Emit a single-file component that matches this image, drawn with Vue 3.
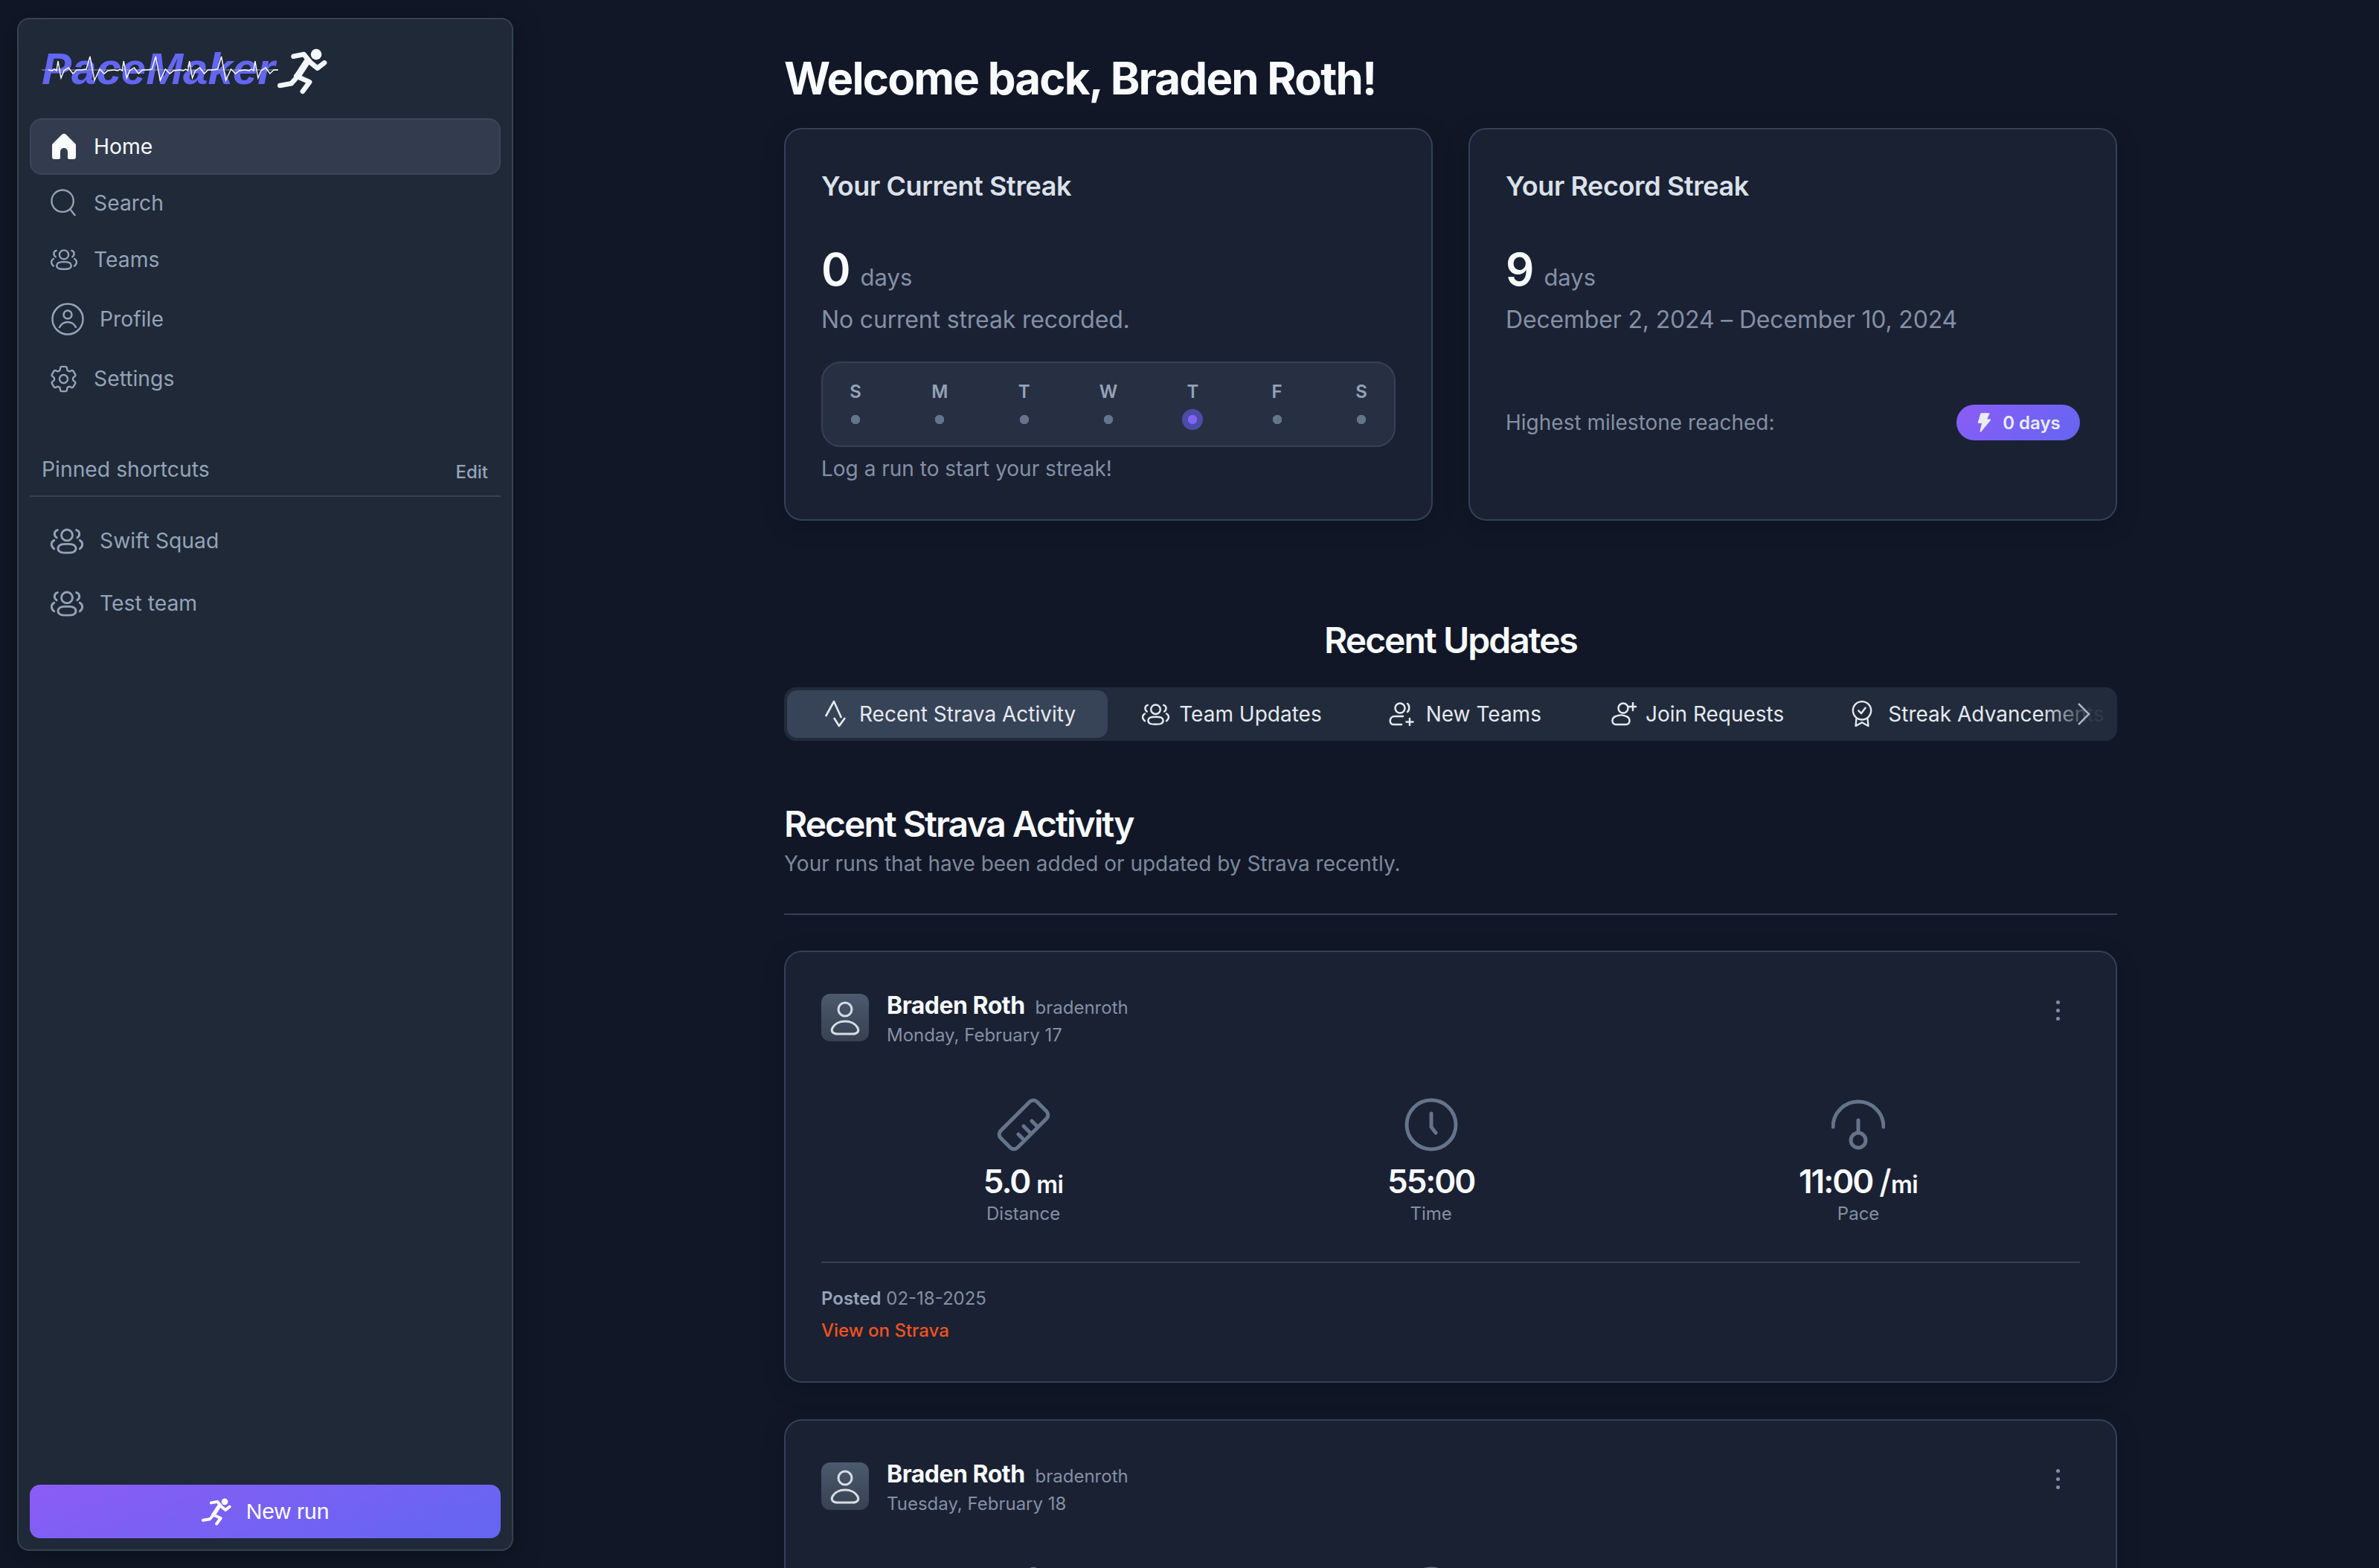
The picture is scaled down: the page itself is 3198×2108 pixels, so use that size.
<template>
  <div class="app">
    <svg class="sprite" aria-hidden="true">
      <symbol id="home" viewBox="0 0 34 36">
        <path fill="currentColor" d="M14 2a4 4 0 0 1 6 0l12 12a3 3 0 0 1 1 2.500V32a3 3 0 0 1-3 3h-6a2 2 0 0 1-2-2v-8a5 5 0 0 0-10 0v8a2 2 0 0 1-2 2H4a3 3 0 0 1-3-3V16.500A3 3 0 0 1 2 14z" />
      </symbol>
      <symbol id="search" viewBox="0 0 38 40">
        <circle cx="17" cy="17" r="15.500" fill="none" stroke="currentColor" stroke-width="2.500" />
        <path d="M28 29l7 9" fill="none" stroke="currentColor" stroke-width="2.500" />
      </symbol>
      <symbol id="team" viewBox="0 0 40 32">
        <g fill="none" stroke="currentColor" stroke-width="2.500" stroke-linecap="round">
          <circle cx="20" cy="9" r="6.500" />
          <path d="M12 20.500c-3 2-3.500 6 0 8 2 1.500 14 1.500 16 0 3.500-2 3-6 0-8-3-1.500-13-1.500-16 0z" />
          <path d="M9 3C5 4 4 9 8 12M31 3c4 1 5 6 1 9M5 15c-4 2-4 7 0 10M35 15c4 2 4 7 0 10" />
        </g>
      </symbol>
      <symbol id="profile" viewBox="0 0 44 44">
        <g fill="none" stroke="currentColor" stroke-width="2.500" stroke-linecap="round">
          <circle cx="22" cy="22" r="20.500" />
          <circle cx="22" cy="16" r="5.500" />
          <path d="M11 33c3-6 7-7 11-7s8 1 11 7" />
        </g>
      </symbol>
      <symbol id="gear" viewBox="2.500 2 19 20">
        <path fill="none" stroke="currentColor" stroke-width="1.300" d="M9.594 3.940c.09-.542.56-.94 1.110-.94h2.593c.55 0 1.020.398 1.110.94l.213 1.281c.063.374.313.686.645.870.074.040.147.083.22.127.325.196.72.257 1.075.124l1.217-.456a1.125 1.125 0 0 1 1.370.49l1.296 2.247a1.125 1.125 0 0 1-.26 1.431l-1.003.827c-.293.241-.438.613-.43.992a7.723 7.723 0 0 1 0 .255c-.008.378.137.75.43.991l1.004.827c.424.35.534.955.26 1.430l-1.298 2.247a1.125 1.125 0 0 1-1.369.491l-1.217-.456c-.355-.133-.75-.072-1.076.124a6.470 6.470 0 0 1-.22.128c-.331.183-.581.495-.644.869l-.213 1.281c-.09.543-.56.94-1.110.94h-2.594c-.55 0-1.019-.398-1.110-.94l-.213-1.281c-.062-.374-.312-.686-.644-.87a6.520 6.520 0 0 1-.22-.127c-.325-.196-.72-.257-1.076-.124l-1.217.456a1.125 1.125 0 0 1-1.369-.49l-1.297-2.247a1.125 1.125 0 0 1 .26-1.431l1.004-.827c.292-.24.437-.613.43-.991a6.932 6.932 0 0 1 0-.255c.007-.38-.138-.751-.43-.992l-1.004-.827a1.125 1.125 0 0 1-.26-1.430l1.297-2.247a1.125 1.125 0 0 1 1.370-.491l1.216.456c.356.133.751.072 1.076-.124.072-.044.146-.086.22-.128.332-.183.582-.495.644-.869l.214-1.280z" />
        <circle cx="12" cy="12" r="3" fill="none" stroke="currentColor" stroke-width="1.300" />
      </symbol>
      <symbol id="runner" viewBox="0 0 202 186">
        <circle cx="157" cy="24" r="22" fill="currentColor" />
        <g fill="none" stroke="currentColor" stroke-linecap="round" stroke-linejoin="round">
          <path stroke-width="20" d="M65 32l42-8 28 34 27 22 28-22" />
          <path stroke-width="27" d="M122 50L84 108" />
          <path stroke-width="20" d="M76 112l54 24-28 38" />
          <path stroke-width="20" d="M74 122l-18 20-46 8" />
        </g>
      </symbol>
      <symbol id="bolt" viewBox="0 0 24 30">
        <path fill="currentColor" stroke="currentColor" stroke-width="2" stroke-linejoin="round" d="M8 2h11l-4 9h6L7 28l3-13H4z" />
      </symbol>
      <symbol id="strava" viewBox="0 0 34 38">
        <path d="M4 22L15 2l10 22M15 24l7 11 8-11" fill="none" stroke="currentColor" stroke-width="2.600" stroke-linejoin="round" />
      </symbol>
      <symbol id="newteam" viewBox="0 0 38 32">
        <g fill="none" stroke="currentColor" stroke-width="2.500" stroke-linecap="round">
          <circle cx="15" cy="8" r="6.500" />
          <path d="M25 2c3 2 3 9 0 11M19 19H8c-8 0-8 11-2 11h11M28 22v9M23.500 26.500h9" />
        </g>
      </symbol>
      <symbol id="join" viewBox="0 0 38 32">
        <g fill="none" stroke="currentColor" stroke-width="2.500" stroke-linecap="round">
          <circle cx="20" cy="8" r="6.500" />
          <path d="M10 19c-6 2-6 10 0 11h14c6-1 6-9 0-11-4-2-10-2-14 0zM33 1v10M28 6h10" />
        </g>
      </symbol>
      <symbol id="medal" viewBox="0 0 32 38">
        <g fill="none" stroke="currentColor" stroke-width="2.500" stroke-linejoin="round" stroke-linecap="round">
          <circle cx="16" cy="14" r="13" />
          <path d="M11 14l4 4 6-8M8 25l-1 11 9-5 9 5-1-11" />
        </g>
      </symbol>
      <symbol id="ruler" viewBox="0 0 72 72">
        <g fill="none" stroke="currentColor" stroke-width="5" stroke-linecap="round">
          <rect x="20" y="1.500" width="32" height="69" rx="7" transform="rotate(45 36 36)" />
          <path d="M53 37l-6-6M44 46l-8-8M35 55l-6-6" />
        </g>
      </symbol>
      <symbol id="clock" viewBox="0 0 72 72">
        <g fill="none" stroke="currentColor" stroke-width="5" stroke-linecap="round" stroke-linejoin="round">
          <circle cx="36" cy="36" r="33" />
          <path d="M36 21v18l6 8" />
        </g>
      </symbol>
      <symbol id="gauge" viewBox="0 0 72 72">
        <g fill="none" stroke="currentColor" stroke-width="5" stroke-linecap="round">
          <path d="M2 39a34 34 0 0 1 68 0" />
          <path d="M36 30v16" />
          <circle cx="36" cy="57" r="10" />
        </g>
      </symbol>
    </svg>

    <aside class="sidebar">
      <div class="logo">
        <div class="logo-mark">
          <span class="logo-text">PaceMaker</span>
          <svg class="ecg" viewBox="0 0 320 40">
            <path class="ecg-base" d="M0 20H318" />
            <path class="ecg-line" :d="ecgPath" />
          </svg>
        </div>
        <svg class="logo-run"><use href="#runner" /></svg>
      </div>

      <nav class="nav">
        <a
          v-for="item in navItems"
          :key="item.label"
          class="nav-item"
          :class="{ active: item.active, tall: item.tall }"
        >
          <svg :class="'ni-' + item.icon"><use :href="'#' + item.icon" /></svg>
          <span>{{ item.label }}</span>
        </a>
      </nav>

      <div class="pinned-head">
        <span>Pinned shortcuts</span>
        <a class="edit">Edit</a>
      </div>
      <div class="pinned">
        <a v-for="t in pinned" :key="t" class="nav-item tall">
          <svg class="ni-pin"><use href="#team" /></svg>
          <span>{{ t }}</span>
        </a>
      </div>

      <button class="new-run">
        <svg class="btn-run"><use href="#runner" /></svg>
        New run
      </button>
    </aside>

    <main class="main">
      <h1 class="welcome">Welcome back, Braden Roth!</h1>

      <div class="streaks">
        <section class="card streak">
          <h3>Your Current Streak</h3>
          <div class="count"><strong>0</strong><span>days</span></div>
          <p class="sub">No current streak recorded.</p>
          <div class="week">
            <div v-for="(d, i) in days" :key="i" class="day">
              <span class="day-name">{{ d }}</span>
              <span class="dot" :class="{ today: i === 4 }"></span>
            </div>
          </div>
          <p class="hint">Log a run to start your streak!</p>
        </section>

        <section class="card streak">
          <h3>Your Record Streak</h3>
          <div class="count"><strong>9</strong><span>days</span></div>
          <p class="sub">December 2, 2024 – December 10, 2024</p>
          <div class="milestone">
            <span>Highest milestone reached:</span>
            <span class="badge">
              <svg class="bolt"><use href="#bolt" /></svg>
              0 days
            </span>
          </div>
        </section>
      </div>

      <h2 class="updates-title">Recent Updates</h2>

      <div class="tabs">
        <div class="tab-row">
          <a
            v-for="(tab, i) in tabs"
            :key="tab.label"
            class="tab"
            :class="{ active: i === 0 }"
          >
            <svg :class="'ti-' + tab.icon"><use :href="'#' + tab.icon" /></svg>
            <span>{{ tab.label }}</span>
          </a>
        </div>
        <div class="tab-fade">
          <svg class="chev" viewBox="0 0 18 30"><path d="M2 1l14 14L2 29" /></svg>
        </div>
      </div>

      <h2 class="section-title">Recent Strava Activity</h2>
      <p class="section-sub">Your runs that have been added or updated by Strava recently.</p>
      <hr class="divider" />

      <article v-for="run in runs" :key="run.date" class="card run">
        <header class="run-head">
          <div class="avatar">
            <svg viewBox="0 0 64 64">
              <circle cx="32" cy="21" r="9" />
              <path d="M22 54c-7 0-9-4-7-8 3-6 10-9 17-9s14 3 17 9c2 4 0 8-7 8z" />
            </svg>
          </div>
          <div class="who">
            <div><span class="name">Braden Roth</span><span class="handle">bradenroth</span></div>
            <div class="date">{{ run.date }}</div>
          </div>
          <div class="more"><i></i><i></i><i></i></div>
        </header>

        <div class="stats">
          <div v-for="s in run.stats" :key="s.label" class="stat">
            <svg class="stat-ico"><use :href="'#' + s.icon" /></svg>
            <div class="stat-val">
              {{ s.value }}<small v-if="s.unit"><span v-if="s.perUnit" class="slash">/</span>{{ s.unit }}</small>
            </div>
            <div class="stat-label">{{ s.label }}</div>
          </div>
        </div>

        <footer class="run-foot">
          <div class="posted"><b>Posted</b> {{ run.posted }}</div>
          <a class="strava-link">View on Strava</a>
        </footer>
      </article>
    </main>
  </div>
</template>

<script setup>
const navItems = [
  { label: 'Home', icon: 'home', active: true },
  { label: 'Search', icon: 'search' },
  { label: 'Teams', icon: 'team' },
  { label: 'Profile', icon: 'profile', tall: true },
  { label: 'Settings', icon: 'gear' }
]
const pinned = ['Swift Squad', 'Test team']
const days = ['S', 'M', 'T', 'W', 'T', 'F', 'S']
const tabs = [
  { label: 'Recent Strava Activity', icon: 'strava' },
  { label: 'Team Updates', icon: 'team' },
  { label: 'New Teams', icon: 'newteam' },
  { label: 'Join Requests', icon: 'join' },
  { label: 'Streak Advancements', icon: 'medal' }
]

const stats = [
  { icon: 'ruler', value: '5.0', unit: 'mi', label: 'Distance' },
  { icon: 'clock', value: '55:00', label: 'Time' },
  { icon: 'gauge', value: '11:00', unit: 'mi', perUnit: true, label: 'Pace' }
]
const runs = [
  { date: 'Monday, February 17', posted: '02-18-2025', stats },
  { date: 'Tuesday, February 18', posted: '02-18-2025', stats }
]

// heartbeat trace over the logo, one period is a small + a big spike
const beat = [
  [0, 20], [5, 21], [8, 19], [11, 21], [13, 8], [17, 31], [21, 21], [27, 17], [33, 25],
  [38, 20], [44, 20], [51, 19], [56, 2], [62, 34], [69, 19], [75, 25], [80, 21], [88, 20]
]
let pts = []
for (let p = 0; p < 3; p++) {
  pts = pts.concat(beat.map(([x, y]) => [x + 9 + p * 88.3, y]))
}
pts = pts.concat(beat.slice(0, 11).map(([x, y]) => [x + 9 + 3 * 88.3, y]))
const ecgPath = 'M' + pts.map(([x, y]) => x.toFixed(1) + ' ' + y).join('L')
</script>

<style>
html, body {
  margin: 0;
  background: #111727;
  overflow: hidden;
}
</style>

<style scoped>
.app {
  display: flex;
  height: 100vh;
  overflow: hidden;
  background: #111727;
  font-family: Inter, "Noto Sans", sans-serif;
  color: #94a3b8;
}
.sprite {
  position: absolute;
  width: 0;
  height: 0;
}
a {
  text-decoration: none;
}

/* sidebar */
.sidebar {
  flex: none;
  box-sizing: border-box;
  width: 667px;
  height: 2061px;
  margin: 24px 0 0 23px;
  padding: 0 15px 15px;
  display: flex;
  flex-direction: column;
  background: #1f2937;
  border: 2px solid #374151;
  border-radius: 16px;
  box-shadow: 0 8px 40px rgba(0, 0, 0, 0.3);
}
.logo {
  height: 133px;
  display: flex;
  align-items: center;
  padding-left: 16px;
  flex: none;
}
.logo-mark {
  position: relative;
  width: 318px;
}
.logo-text {
  display: block;
  font: italic 700 60px/60px "Liberation Sans", Arial, sans-serif;
  color: #6366f1;
}
.ecg {
  position: absolute;
  left: 0;
  top: 11px;
  width: 320px;
  height: 40px;
}
.ecg-base {
  stroke: #9ca3af;
  stroke-width: 1;
  fill: none;
}
.ecg-line {
  stroke: #fff;
  stroke-width: 1.400;
  fill: none;
}
.logo-run {
  width: 67px;
  height: 62px;
  color: #f3f6fb;
  margin: 7px 0 0 -1px;
}
.nav-item {
  box-sizing: border-box;
  height: 76px;
  display: grid;
  grid-template-columns: 59px 1fr;
  align-items: center;
  padding: 0 25px;
  font-size: 28.300px;
  color: #94a3b8;
  border: 2px solid transparent;
  border-radius: 16px;
}
.nav-item.active {
  background: #323c4e;
  border-color: #3b4657;
  color: #f8fafc;
}
.nav-item.tall {
  height: 84px;
  grid-template-columns: 67px 1fr;
}
.ni-home { width: 34px; height: 36px; margin-left: 2px; }
.ni-search { width: 36px; height: 38px; margin-left: 1px; }
.ni-team { width: 38px; height: 30px; }
.ni-profile { width: 44px; height: 44px; margin-left: 2px; }
.ni-gear { width: 35px; height: 37px; margin-left: 1px; }
.ni-pin { width: 46px; height: 37px; }

.pinned-head {
  display: flex;
  justify-content: space-between;
  align-items: center;
  box-sizing: border-box;
  height: 68px;
  margin-top: 53px;
  padding: 0 17px 4px 16px;
  border-bottom: 2px solid #374151;
  font-size: 28.300px;
  flex: none;
}
.edit {
  font-size: 24px;
  font-weight: 500;
  color: #94a3b8;
  margin-top: 6px;
}
.pinned {
  margin-top: 17px;
}
.new-run {
  margin-top: auto;
  height: 72px;
  display: flex;
  align-items: center;
  justify-content: center;
  gap: 20px;
  border: none;
  border-radius: 14px;
  background: linear-gradient(160deg, #8b5cf6, #6366f1);
  color: #fff;
  font: 30px "Liberation Sans", Arial, sans-serif;
}
.btn-run {
  width: 40px;
  height: 37px;
  color: #fff;
}

/* main column */
.main {
  flex: none;
  box-sizing: border-box;
  width: 1792px;
  margin-left: 364px;
  padding-top: 69px;
}
.welcome {
  margin: 0 0 31px;
  font-size: 60px;
  line-height: 72px;
  font-weight: 700;
  letter-spacing: -1.800px;
  color: #f8fafc;
}
.card {
  box-sizing: border-box;
  background: #1a2133;
  border: 2px solid #334155;
  border-radius: 24px;
  box-shadow: 0 8px 32px rgba(0, 0, 0, 0.18);
}
.streaks {
  display: grid;
  grid-template-columns: 872px 872px;
  gap: 48px;
}
.streak {
  height: 528px;
  padding: 48px;
}
.streak h3 {
  margin: 0;
  font-size: 36px;
  line-height: 56px;
  font-weight: 600;
  letter-spacing: -0.400px;
  color: #dbe1ea;
}
.count {
  margin-top: 48px;
  display: flex;
  align-items: baseline;
  gap: 13px;
  height: 72px;
}
.count strong {
  font-size: 60px;
  line-height: 72px;
  font-weight: 600;
  color: #f8fafc;
}
.count span {
  font-size: 31px;
  color: #8490a4;
}
.sub {
  margin: 10px 0 0;
  font-size: 32px;
  line-height: 44px;
  letter-spacing: -0.170px;
  color: #8490a4;
}
.week {
  box-sizing: border-box;
  height: 115px;
  margin-top: 34px;
  padding: 0 30px;
  display: flex;
  justify-content: space-between;
  align-items: center;
  background: #273043;
  border: 2px solid #374151;
  border-radius: 26px;
}
.day {
  width: 28px;
  display: flex;
  flex-direction: column;
  align-items: center;
  gap: 8px;
}
.day-name {
  margin-top: 2px;
  font-size: 24px;
  line-height: 30px;
  font-weight: 600;
  color: #94a3b8;
}
.dot {
  box-sizing: border-box;
  width: 28px;
  height: 28px;
  border-radius: 50%;
  background: radial-gradient(circle, #64748b 6px, transparent 6.500px);
}
.dot.today {
  background: radial-gradient(circle, #8163f5 6px, #4a4ca8 6.500px);
}
.hint {
  margin: 9px 0 0;
  font-size: 28px;
  line-height: 40px;
  color: #8490a4;
}
.milestone {
  margin-top: 92px;
  display: flex;
  justify-content: space-between;
  align-items: center;
  font-size: 28px;
  color: #8490a4;
}
.badge {
  height: 48px;
  width: 166px;
  box-sizing: border-box;
  display: flex;
  align-items: center;
  justify-content: center;
  gap: 14px;
  border-radius: 24px;
  background: linear-gradient(135deg, #8b5cf6, #6366f1);
  color: #e8ecf5;
  font-size: 24px;
  font-weight: 600;
}
.bolt {
  width: 22px;
  height: 28px;
}
.updates-title {
  margin: 131px 0 33px;
  text-align: center;
  font-size: 48px;
  line-height: 60px;
  font-weight: 600;
  letter-spacing: -2px;
  color: #f8fafc;
}
.tabs {
  position: relative;
  height: 72px;
  overflow: hidden;
  background: #212b3b;
  border-radius: 16px;
}
.tab-row {
  display: flex;
  padding: 4px;
  height: 64px;
}
.tab {
  flex: none;
  display: flex;
  align-items: center;
  gap: 12px;
  padding: 0 45px;
  font-size: 28px;
  color: #e5e9f0;
  border-radius: 14px;
}
.tab.active {
  background: #374357;
  padding: 0 43px 0 48px;
  gap: 15px;
}
.tab svg {
  flex: none;
}
.ti-strava { width: 34px; height: 38px; }
.ti-team { width: 39px; height: 31px; }
.ti-newteam { width: 38px; height: 32px; }
.ti-join { width: 38px; height: 32px; }
.ti-medal { width: 30px; height: 36px; margin-right: 8px; }
.tab-fade {
  position: absolute;
  right: 0;
  top: 0;
  bottom: 0;
  width: 100px;
  background: linear-gradient(to right, rgba(33, 43, 59, 0), rgba(33, 43, 59, 0.92) 60%);
}
.chev {
  position: absolute;
  left: 46px;
  top: 21px;
  width: 18px;
  height: 30px;
  fill: none;
  stroke: #aab3c2;
  stroke-width: 2.500;
}
.section-title {
  margin: 82px 0 0;
  font-size: 48px;
  line-height: 60px;
  font-weight: 600;
  letter-spacing: -2px;
  color: #f8fafc;
}
.section-sub {
  margin: 3px 0 0;
  font-size: 28px;
  line-height: 40px;
  color: #7d899c;
}
.divider {
  margin: 47px 0 48px;
  border: none;
  border-top: 2px solid #374151;
}
.run {
  padding: 56px 48px 52px;
  margin-bottom: 49px;
}
.run-head {
  display: flex;
  align-items: flex-start;
  gap: 24px;
  height: 64px;
}
.avatar {
  width: 64px;
  height: 64px;
  flex: none;
  border-radius: 12px;
  background: linear-gradient(#4b5a6e, #374151);
}
.avatar svg {
  display: block;
  width: 64px;
  height: 64px;
  fill: none;
  stroke: #d7dde5;
  stroke-width: 3;
}
.who {
  margin-top: -2px;
  flex: 1;
}
.name {
  font-size: 32px;
  line-height: 36px;
  font-weight: 700;
  letter-spacing: -0.500px;
  color: #f8fafc;
}
.handle {
  margin-left: 14px;
  font-size: 24px;
  color: #8490a4;
}
.date {
  margin-top: 6px;
  font-size: 24px;
  line-height: 32px;
  color: #8490a4;
}
.more {
  display: flex;
  flex-direction: column;
  gap: 6px;
  margin: 9px 27px 0 0;
}
.more i {
  width: 5px;
  height: 5px;
  border-radius: 50%;
  background: #8490a4;
}
.stats {
  margin-top: 76px;
  display: flex;
  justify-content: space-around;
}
.stat {
  display: flex;
  flex-direction: column;
  align-items: center;
}
.stat-ico {
  width: 72px;
  height: 72px;
  color: #64748b;
}
.stat-val {
  margin-top: 12px;
  height: 56px;
  font-size: 44px;
  line-height: 56px;
  font-weight: 600;
  letter-spacing: -2px;
  color: #f8fafc;
}
.stat-val small {
  margin-left: 9px;
  font-size: 32px;
  line-height: 1;
  font-weight: 600;
  letter-spacing: -0.500px;
}
.slash {
  font-size: 44px;
  font-weight: 500;
  line-height: 1;
}
.stat-label {
  font-size: 24px;
  line-height: 32px;
  color: #8490a4;
}
.run-foot {
  margin-top: 48px;
  border-top: 2px solid #374151;
  padding-top: 32px;
  font-size: 24px;
  line-height: 32px;
  color: #8490a4;
}
.posted b {
  font-weight: 600;
  color: #94a3b8;
}
.strava-link {
  display: block;
  margin-top: 11px;
  font-weight: 500;
  color: #f0531f;
}
</style>
